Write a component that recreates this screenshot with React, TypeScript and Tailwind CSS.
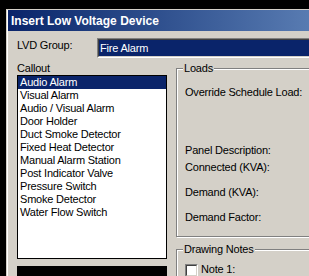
const callouts = [
  'Audio Alarm',
  'Visual Alarm',
  'Audio / Visual Alarm',
  'Door Holder',
  'Duct Smoke Detector',
  'Fixed Heat Detector',
  'Manual Alarm Station',
  'Post Indicator Valve',
  'Pressure Switch',
  'Smoke Detector',
  'Water Flow Switch',
];

function GroupBox({ title, height, children }: { title: string; height: string; children?: React.ReactNode }) {
  return (
    <div className={`relative ${height} w-[400px] border border-[#808080] shadow-[1px_1px_0_#ffffff,inset_1px_1px_0_#ffffff] pl-[8px]`}>
      <span className="absolute left-[6px] top-[-7px] bg-[#d4d0c8] px-[1px] leading-[13px]">{title}</span>
      {children}
    </div>
  );
}

export default function App() {
  return (
    <div
      className="w-[309px] h-[276px] bg-black overflow-hidden text-[11px] tracking-[-0.2px] text-black"
      style={{ fontFamily: '"Liberation Sans", Arial, sans-serif' }}
    >
      <div className="ml-[6px] mt-[9px] w-[600px] h-[300px] bg-[#d4d0c8] border-t border-l border-[#d4d0c8]">
        <div className="h-full border-l border-white">
          {/* Title bar */}
          <div className="h-[21px] w-[560px] bg-linear-to-r from-[#0a246a] to-[#a6caf0] flex items-center pl-[3px]">
            <span className="text-white font-bold text-[12px] tracking-normal leading-[14px]">Insert Low Voltage Device</span>
          </div>

          <div className="pl-[9px]">
            {/* LVD Group */}
            <div className="flex mt-[7px]">
              <span className="w-[80px] mt-[1px] leading-[13px]">LVD Group:</span>
              <div className="flex-1 h-[20px] border border-t-[#808080] border-l-[#808080] border-r-white border-b-white">
                <div className="h-full border border-t-[#404040] border-l-[#404040] border-r-[#d4d0c8] border-b-[#d4d0c8]">
                  <div className="h-full bg-[#0a246a] text-white pl-[1px] leading-[16px]">Fire Alarm</div>
                </div>
              </div>
            </div>

            <div className="flex">
              {/* Callout list */}
              <div className="w-[150px] pt-[4px]">
                <div className="leading-[13px]">Callout</div>
                <div className="h-[184px] border border-black bg-white">
                  {callouts.map((c, i) => (
                    <div
                      key={c}
                      className={`h-[13px] leading-[13px] pl-[2px] whitespace-nowrap ${i === 0 ? 'bg-[#0a246a] text-white' : ''}`}
                    >
                      {c}
                    </div>
                  ))}
                </div>
                <div className="mt-[7px] h-[20px] bg-black" />
              </div>

              {/* Right side */}
              <div className="ml-[9px] pt-[10px]">
                <GroupBox title="Loads" height="h-[169px]">
                  <div className="mt-[17px] leading-[13px]">Override Schedule Load:</div>
                  <div className="mt-[45px] leading-[13px]">Panel Description:</div>
                  <div className="mt-[4px] leading-[13px]">Connected (KVA):</div>
                  <div className="mt-[12px] leading-[13px]">Demand (KVA):</div>
                  <div className="mt-[12px] leading-[13px]">Demand Factor:</div>
                </GroupBox>
                <div className="mt-[12px]">
                  <GroupBox title="Drawing Notes" height="h-[50px]">
                    <div className="mt-[14px] flex items-start">
                      <div className="w-[13px] h-[13px] border border-t-[#808080] border-l-[#808080] border-r-white border-b-white">
                        <div className="h-full border border-t-[#404040] border-l-[#404040] border-r-[#d4d0c8] border-b-[#d4d0c8] bg-white" />
                      </div>
                      <span className="ml-[3px] leading-[13px] mt-[-1px]">Note 1:</span>
                    </div>
                  </GroupBox>
                </div>
              </div>
            </div>
          </div>
        </div>
      </div>
    </div>
  );
}
